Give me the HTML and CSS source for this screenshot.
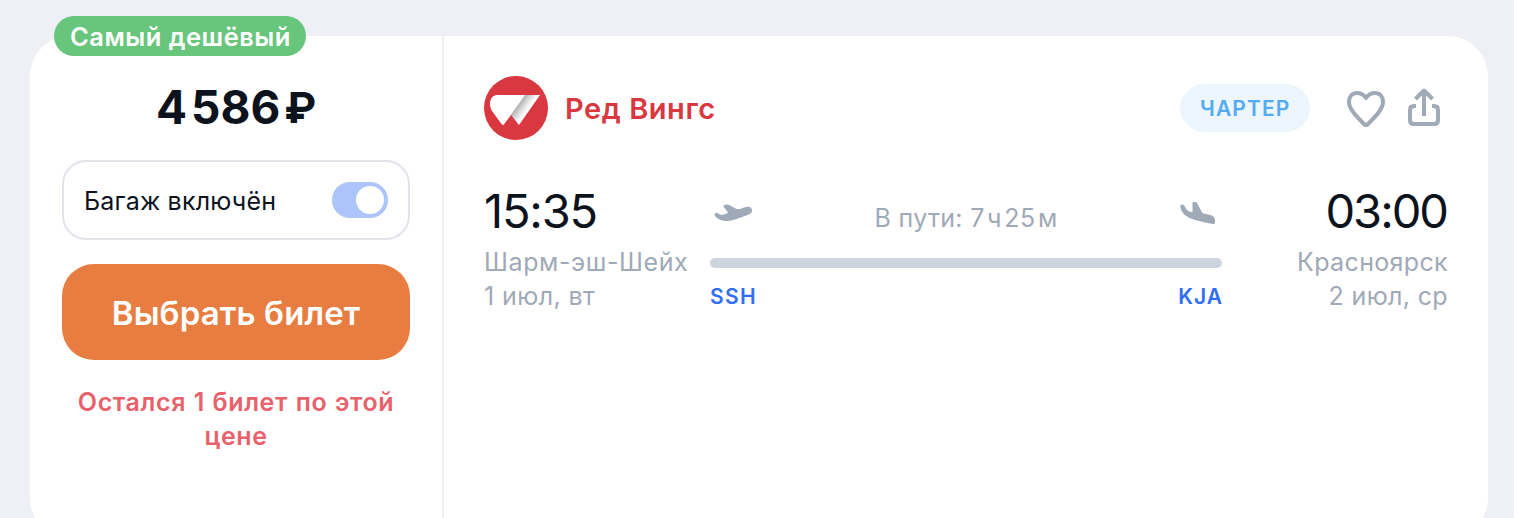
FILE: index.html
```html
<!DOCTYPE html>
<html lang="ru">
<head>
<meta charset="utf-8">
<title>Билеты</title>
<link rel="stylesheet" href="styles.css">
</head>
<body>
<article class="ticket">
  <div class="badge"><span class="badge-text">Самый дешёвый</span></div>
  <aside class="offer">
    <div class="price"><span class="price-thousands">4</span><span class="price-rest">586</span><span class="price-currency">₽</span></div>
    <div class="baggage">
      <span class="baggage-label">Багаж включён</span>
      <span class="toggle"><span class="toggle-knob"></span></span>
    </div>
    <button class="buy"><span class="buy-text">Выбрать билет</span></button>
    <p class="notice">Остался 1 билет по этой<br>цене</p>
  </aside>
  <section class="flight">
    <header class="flight-head">
      <svg class="logo" viewBox="0 0 64 64">
        <defs>
          <linearGradient id="fold" gradientUnits="userSpaceOnUse" x1="33" y1="25" x2="44" y2="33">
            <stop offset="0" stop-color="#959595"/>
            <stop offset=".5" stop-color="#cfcfcf"/>
            <stop offset="1" stop-color="#ffffff"/>
          </linearGradient>
        </defs>
        <circle cx="32" cy="32" r="32" fill="#da3840"/>
        <path d="M13 19H42L27 39 19.500 49Q18 49 17.500 48L8 35C3.500 27 7 19 13 19Z" fill="#fff"/>
        <path d="M41 19H56L35 49 27 39Z" fill="url(#fold)"/>
      </svg>
      <span class="airline">Ред Вингс</span>
      <span class="chip"><span class="chip-text">ЧАРТЕР</span></span>
      <svg class="icon-heart" viewBox="0 0 40 40" fill="none" stroke="#9fa9b7" stroke-width="4" stroke-linejoin="round">
        <path d="M20 10C18 7 15 5 11 5C6 5 3 9 3 14C3 21 11 29 18 36Q20 38 22 36C29 29 37 21 37 14C37 9 34 5 29 5C25 5 22 7 20 10Z"/>
      </svg>
      <svg class="icon-share" viewBox="0 0 32 40" fill="none" stroke="#9fa9b7" stroke-width="4">
        <path d="M8 18H6Q2 18 2 22V32Q2 36 6 36H26Q30 36 30 32V22Q30 18 26 18H24M16 28V3M7.500 11L16 2.500L24.500 11" stroke-linejoin="round"/>
      </svg>
    </header>
    <div class="route">
      <div class="point">
        <div class="time time-from">15:35</div>
        <div class="place place-from">Шарм-эш-Шейх</div>
        <div class="date date-from">1 июл, вт</div>
      </div>
      <div class="path">
        <div class="path-top">
          <svg class="plane-from" viewBox="0 0 40 20">
            <path d="M9.500 2.800C9 1.200 10.800 .3 13 .4C16 .9 20.500 4.500 24 5.200C27 5.200 30 3 33.500 2.700C37 2.300 38.500 5 37.900 7.500C37.400 9.500 35.500 10.200 33 11.200L21 15.600C16 17.400 11 17.400 6.500 16C3.500 15 1.500 12.800 .5 11.200C.3 9.700 1.400 8.700 3.200 8.900C5 9.400 6.200 11 8 10.900C10.500 10.700 13 9.600 14.200 8.500C12.800 6.800 11 4.800 9.500 2.800Z" fill="#9fa9b7"/>
          </svg>
          <span class="duration">В пути: 7<i class="thin"></i>ч<i class="thin"></i>25<i class="thin"></i>м</span>
          <svg class="plane-to" viewBox="0 0 36 24">
            <path d="M.3 3.300Q.3 2.700 1 2.700H3.500C5.500 4.500 5.500 7.200 7.500 8.500C9 9.500 11 10.200 12.500 10V1Q12.500 .1 13.500 .1H15.500Q16.400 .1 17 1L22.300 11C25 12.300 29 12 32 13.500C34.500 14.800 35.600 17.500 34.900 21Q34.500 22.200 33 22C26 21 18 19 10 16.200C4 13.500 .3 9 .3 3.300Z" fill="#9fa9b7"/>
          </svg>
        </div>
        <div class="line"></div>
        <div class="codes"><span class="code-from">SSH</span><span class="code-to">KJA</span></div>
      </div>
      <div class="point point-to">
        <div class="time time-to">03:00</div>
        <div class="place place-to">Красноярск</div>
        <div class="date date-to">2 июл, ср</div>
      </div>
    </div>
  </section>
</article>
</body>
</html>
```

FILE: styles.css
```css
* { box-sizing: border-box; }
body {
  margin: 0;
  height: 518px;
  overflow: hidden;
  padding: 36px 26px 0 30px;
  background: #eff0f5;
  color: #0c131d;
  font-family: Inter, "Noto Sans", sans-serif;
  white-space: nowrap;
}
.ticket {
  position: relative;
  display: flex;
  height: 502px;
  border-radius: 40px;
  background: #fff;
}
.badge {
  position: absolute;
  left: 24px;
  top: -20px;
  width: 252px;
  height: 40px;
  padding-left: 16px;
  border-radius: 20px;
  background: #67c57c;
  color: #fff;
  font-size: 25.5px;
  font-weight: 600;
  line-height: 42px;
}
.badge-text { letter-spacing: .5px; }
.offer {
  width: 414px;
  flex: none;
  padding: 40px 32px 0;
  border-right: 2px solid #f1f1f3;
}
.price {
  display: flex;
  height: 64px;
  padding-left: 94px;
  font-size: 46px;
  font-weight: 700;
  line-height: 62px;
}
.price-rest { margin-left: 4px; }
.price-currency { margin-left: 4px; font-size: 43px; font-weight: 650; line-height: 62px; }
.baggage {
  display: flex;
  align-items: center;
  justify-content: space-between;
  height: 80px;
  margin-top: 20px;
  padding: 0 20px;
  border: 2px solid #e2e3e9;
  border-radius: 24px;
  font-size: 25px;
}
.baggage-label { padding-top: 2px; letter-spacing: .2px; }
.toggle {
  display: flex;
  justify-content: flex-end;
  width: 56px;
  height: 36px;
  padding: 4px;
  border-radius: 18px;
  background: #adc4fb;
}
.toggle-knob {
  width: 28px;
  height: 28px;
  border-radius: 50%;
  background: #fff;
}
.buy {
  display: block;
  width: 348px;
  height: 96px;
  margin-top: 24px;
  padding: 1px 0 0;
  border: 0;
  border-radius: 32px;
  background: #e87d41;
  color: #fff;
  font: 600 33px/96px Inter, "Noto Sans", sans-serif;
}
.buy-text { letter-spacing: .1px; }
.notice {
  margin: 25px 0 0;
  color: #e8626c;
  font-size: 25px;
  font-weight: 600;
  letter-spacing: .6px;
  word-spacing: .8px;
  line-height: 34px;
  text-align: center;
}
.flight { flex: 1; padding: 40px 40px 0; }
.flight-head { display: flex; align-items: center; height: 64px; }
.logo { width: 64px; height: 64px; }
.airline {
  margin-left: 17px;
  color: #d9383f;
  font-size: 29px;
  font-weight: 600;
  letter-spacing: .55px;
}
.chip {
  width: 130px;
  height: 48px;
  margin-left: auto;
  padding-left: 20px;
  border-radius: 24px;
  background: #edf6fe;
  color: #55abef;
  font-size: 21px;
  font-weight: 600;
  letter-spacing: 1.1px;
  line-height: 49px;
}
.icon-heart { width: 40px; height: 40px; margin-left: 36px; }
.icon-share { width: 32px; height: 40px; margin: 0 8px 0 22px; }
.route { display: flex; margin-top: 40px; }
.point { width: 226px; flex: none; }
.point-to { text-align: right; }
.time { height: 65px; font-size: 47px; line-height: 61px; }
.time-from { letter-spacing: -1.2px; }
.time-to { margin-right: 1px; letter-spacing: -2px; }
.place, .date { color: #9fa9b7; font-size: 25px; line-height: 35px; height: 34px; }
.place-from { letter-spacing: .6px; }
.date-from { letter-spacing: .4px; }
.place-to, .date-to { letter-spacing: .35px; }
.path { width: 512px; flex: none; }
.path-top {
  display: flex;
  justify-content: space-between;
  height: 78px;
  padding: 0 6px 0 4px;
}
.plane-from { width: 40px; height: 20px; margin-top: 24px; }
.plane-to { width: 36px; height: 24px; margin-top: 22px; }
.duration { margin-right: 2px; color: #9fa9b7; font-size: 25px; letter-spacing: .3px; line-height: 76px; }
.thin { display: inline-block; width: 2.5px; }
.line { height: 10px; border-radius: 5px; background: #cdd3df; }
.codes {
  display: flex;
  justify-content: space-between;
  margin-top: 12px;
  color: #306ff5;
  font-size: 21px;
  font-weight: 600;
  line-height: 34px;
}
.code-from { letter-spacing: 1.4px; }
.code-to { margin-right: -1px; letter-spacing: 1px; }
```
